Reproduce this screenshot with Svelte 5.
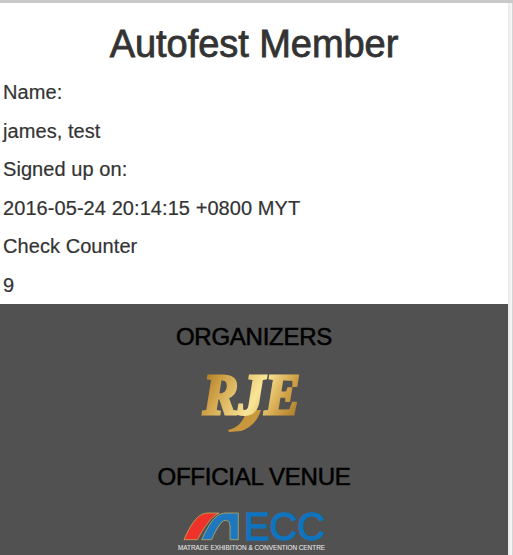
<script lang="ts">
  const rows = ['Name:', 'james, test', 'Signed up on:', '2016-05-24 20:14:15 +0800 MYT', 'Check Counter', '9'];
</script>

<div class="window">
  <div class="page">
    <main>
      <h1>Autofest Member</h1>
      {#each rows as row}
        <p>{row}</p>
      {/each}
    </main>
    <footer>
      <h3>ORGANIZERS</h3>
      <svg class="logo" width="150" height="84" viewBox="177 360 150 84">
        <defs>
          <linearGradient id="gold" gradientUnits="userSpaceOnUse" x1="205" y1="372" x2="295" y2="420">
            <stop offset="0" stop-color="#b07a20" />
            <stop offset="0.22" stop-color="#d3a850" />
            <stop offset="0.55" stop-color="#f9e597" />
            <stop offset="0.8" stop-color="#d2a349" />
            <stop offset="1" stop-color="#a87c28" />
          </linearGradient>
        </defs>
        <path d="M246 410 C245 420 238 428 228 430 L229 432 L241 431 C251 428 258 420 261 410 Z" fill="#c9983e" />
        <text class="rje" x="203" y="413.5" textLength="97" lengthAdjust="spacingAndGlyphs" fill="url(#gold)" stroke="url(#gold)" stroke-width="3">RJE</text>
      </svg>
      <h3 class="venue">OFFICIAL VENUE</h3>
      <svg class="logo" width="150" height="55" viewBox="177 500 150 55">
        <path d="M184 538.7 C190 525 197 512 208 512 L219 512 C211 516 204 526 197.5 538.7 Z" fill="#ee3229" stroke="#c9b765" stroke-width="0.7" />
        <path d="M201.7 538.7 C208 525 215 512 226 512 L238.3 512 L238.3 538.7 L230 538.7 L230 526 C230 518 224 518 221 522 C217 527 214 533 211.7 538.7 Z" fill="#1f78be" stroke="#c9b765" stroke-width="0.7" />
        <text class="ecc" x="244" y="539" textLength="81" lengthAdjust="spacingAndGlyphs">ECC</text>
        <text class="sub" x="178" y="549" textLength="147" lengthAdjust="spacingAndGlyphs">MATRADE EXHIBITION &amp; CONVENTION CENTRE</text>
      </svg>
    </footer>
  </div>
  <div class="scrollbar"></div>
</div>

<style>
  :global(body) {
    margin: 0;
    background: #fff;
    overflow: hidden;
  }
  .window {
    display: flex;
    height: 555px;
    overflow: hidden;
    border-top: 3px solid #c9c9c9;
    box-sizing: border-box;
    font-family: "Liberation Sans", Arial, sans-serif;
    color: #333;
  }
  .page {
    width: 508px;
    flex: none;
  }
  .scrollbar {
    flex: 1;
    background: linear-gradient(to right, #e8e8e8, #f6f6f6 70%, #c4c4c4);
  }
  main {
    height: 301px;
    padding-top: 20px;
    box-sizing: border-box;
  }
  h1 {
    margin: 0 0 13px;
    font-size: 38px;
    line-height: 42px;
    font-weight: 500;
    text-align: center;
    letter-spacing: -0.05px;
    -webkit-text-stroke: 0.8px #333;
  }
  p {
    margin: 0 0 10px 3px;
    font-size: 20px;
    line-height: 28.57px;
    letter-spacing: 0.07px;
    -webkit-text-stroke: 0.2px #333;
  }
  footer {
    height: 251px;
    background: #515151;
    display: flex;
    flex-direction: column;
    align-items: center;
    padding-top: 20px;
    box-sizing: border-box;
  }
  h3 {
    margin: 0 0 10px;
    font-size: 24px;
    line-height: 26.4px;
    font-weight: 500;
    letter-spacing: -0.25px;
    color: #000;
    -webkit-text-stroke: 0.55px #000;
  }
  .logo {
    display: block;
    flex: none;
    margin-right: 4px;
  }
  .rje {
    font-family: "Liberation Serif", serif;
    font-style: italic;
    font-weight: 700;
    font-size: 58px;
  }
  .venue {
    margin-top: 20px;
  }
  .ecc {
    font-family: "Liberation Sans", sans-serif;
    font-size: 39px;
    fill: #0f74bd;
    stroke: #0f74bd;
    stroke-width: 1.3;
  }
  .sub {
    font-family: "Liberation Sans", sans-serif;
    font-size: 7.4px;
    fill: #e4e4e4;
    stroke: #e4e4e4;
    stroke-width: 0.1;
  }
</style>
